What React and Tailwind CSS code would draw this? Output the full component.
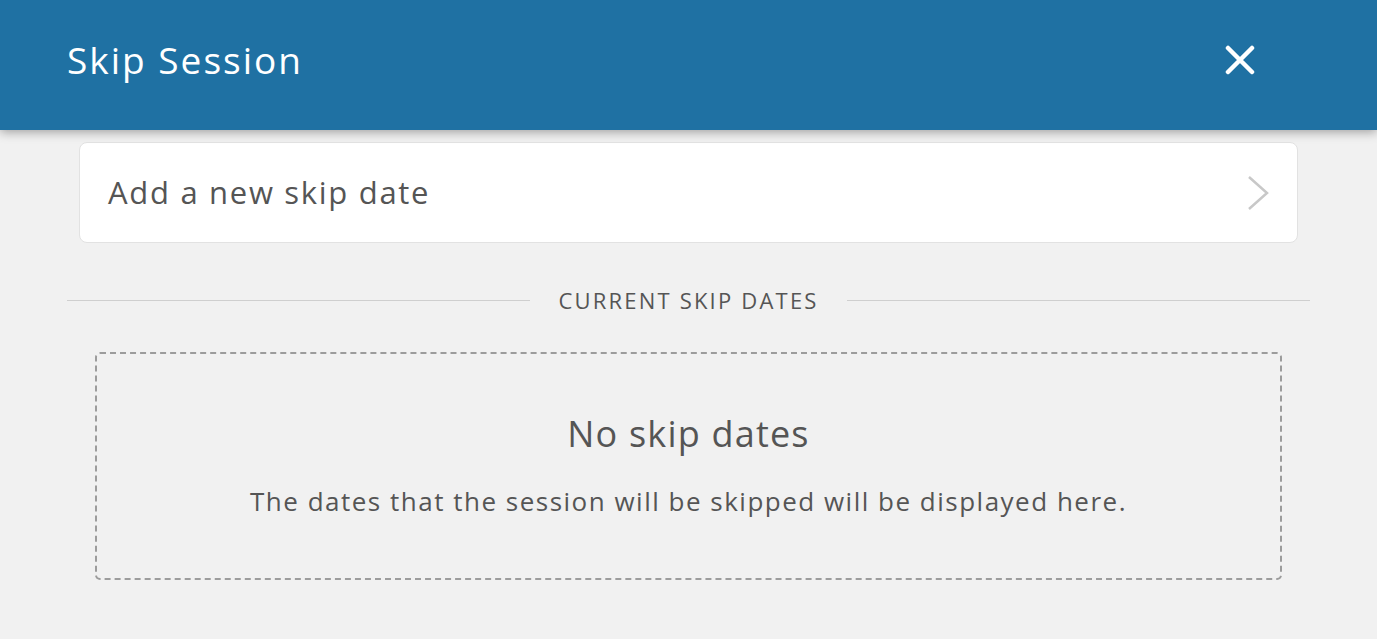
import React from "react";

const font = { fontFamily: '"Open Sans", "Liberation Sans", sans-serif' };

function CloseIcon() {
  return (
    <svg width="30" height="30" viewBox="0 0 30 30" fill="none">
      <path d="M3 3L27 27M27 3L3 27" stroke="white" strokeWidth="4.5" strokeLinecap="round" />
    </svg>
  );
}

function Chevron() {
  return (
    <svg width="22" height="36" viewBox="0 0 22 36" fill="none">
      <path d="M2 2L20 18L2 34" stroke="#c8c8c8" strokeWidth="2.5" />
    </svg>
  );
}

export default function App() {
  return (
    <div className="min-h-[639px] bg-[#f1f1f1]" style={font}>
      <header className="relative z-10 flex h-[130px] items-center justify-between bg-[#1f71a3] pb-[11px] pl-[67px] pr-[122px] shadow-[0_2px_10px_rgba(0,0,0,0.35)]">
        <h1 className="text-[37px] tracking-[2px] text-white">Skip Session</h1>
        <button className="flex items-center">
          <CloseIcon />
        </button>
      </header>

      <main className="px-[67px] pt-[12px]">
        <div className="mx-[12px] flex h-[101px] items-center justify-between rounded-lg border border-[#e2e2e2] bg-white pl-[28px] pr-[28px]">
          <span className="text-[31px] tracking-[1.7px] text-[#555]">Add a new skip date</span>
          <Chevron />
        </div>

        <div className="mt-[41px] flex items-center gap-[28px]">
          <div className="h-px flex-1 bg-[#cfcfcf]" />
          <span className="text-[22px] uppercase tracking-[2.2px] text-[#555]">Current skip dates</span>
          <div className="h-px flex-1 bg-[#cfcfcf]" />
        </div>

        <div className="mx-[28px] mt-[35px] flex h-[228px] flex-col items-center rounded-[5px] border-2 border-dashed border-[#9c9c9c] pt-[53px]">
          <h2 className="text-[36px] tracking-[1.2px] text-[#555]">No skip dates</h2>
          <p className="mt-[21px] text-[26px] tracking-[1.5px] text-[#555]">
            The dates that the session will be skipped will be displayed here.
          </p>
        </div>
      </main>
    </div>
  );
}
